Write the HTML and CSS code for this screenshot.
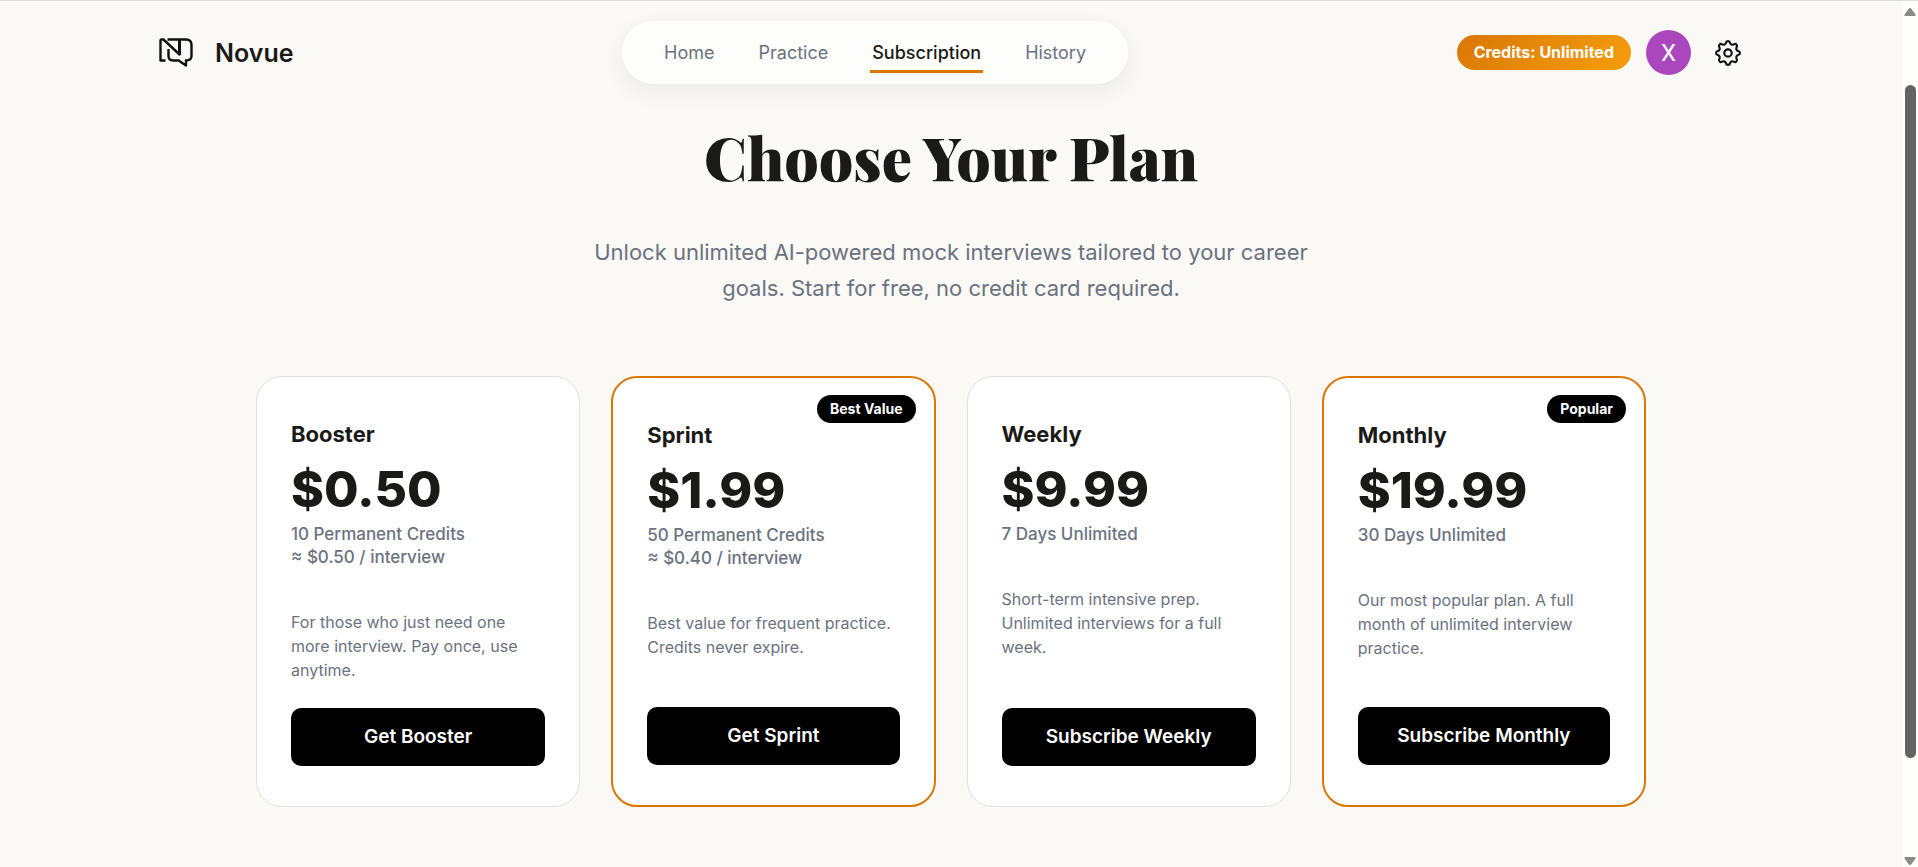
FILE: index.html
```html
<!DOCTYPE html>
<html lang="en">
<head>
<meta charset="utf-8">
<meta name="viewport" content="width=device-width, initial-scale=1">
<title>Novue – Subscription</title>
<link rel="stylesheet" href="styles.css">
</head>
<body>
<div class="page">
  <header class="topbar">
    <a class="brand" href="#">
      <svg class="brand-logo" viewBox="0 0 34 30" fill="none" stroke="#111" stroke-width="2.400" stroke-linejoin="round">
        <path d="M6.500 22.500H1.500V2.500Q1.500 1.500 2.500 1.500H4.500L20.500 16.500V3.500"/>
        <path d="M8.500 1.500H27Q32.500 1.500 32.500 7V18Q32.500 22.500 27 22.500V27.500L21 23.500L20 22.500H14Q9.500 22.500 9.500 18V11"/>
        <path d="M20.500 2V17" stroke-width="3"/>
      </svg>
      <span>Novue</span>
    </a>
    <nav class="nav">
      <a href="#">Home</a>
      <a href="#">Practice</a>
      <a class="active" href="#" aria-current="page">Subscription</a>
      <a href="#">History</a>
    </nav>
    <div class="account">
      <span class="credits">Credits: Unlimited</span>
      <button class="avatar" type="button">X</button>
      <button class="settings" type="button" aria-label="Settings">
        <svg viewBox="-12 -12 24 24" fill="none" stroke="#111" stroke-width="2" stroke-linejoin="round">
          <path d="M9.420-1.870A1.900 1.900 0 0 1 9.420 1.870A2.300 2.300 0 0 0 7.980 5.330A1.900 1.900 0 0 1 5.330 7.980A2.300 2.300 0 0 0 1.870 9.420A1.900 1.900 0 0 1-1.870 9.420A2.300 2.300 0 0 0-5.330 7.980A1.900 1.900 0 0 1-7.980 5.330A2.300 2.300 0 0 0-9.420 1.870A1.900 1.900 0 0 1-9.420-1.870A2.300 2.300 0 0 0-7.980-5.330A1.900 1.900 0 0 1-5.330-7.980A2.300 2.300 0 0 0-1.870-9.420A1.900 1.900 0 0 1 1.870-9.420A2.300 2.300 0 0 0 5.330-7.980A1.900 1.900 0 0 1 7.980-5.330A2.300 2.300 0 0 0 9.420-1.870Z"/>
          <circle r="3.400"/>
        </svg>
      </button>
    </div>
  </header>

  <main class="content">
    <h1>Choose Your Plan</h1>
    <p class="lead">Unlock unlimited AI-powered mock interviews tailored to your career goals. Start for free, no credit card required.</p>

    <section class="plans">
      <article class="card">
        <h2>Booster</h2>
        <p class="price">$0.50</p>
        <p class="terms">10 Permanent Credits<br>≈ $0.50 / interview</p>
        <p class="desc">For those who just need one more interview. Pay once, use anytime.</p>
        <button class="buy" type="button">Get Booster</button>
      </article>
      <article class="card featured">
        <span class="badge">Best Value</span>
        <h2>Sprint</h2>
        <p class="price">$1.99</p>
        <p class="terms">50 Permanent Credits<br>≈ $0.40 / interview</p>
        <p class="desc">Best value for frequent practice. Credits never expire.</p>
        <button class="buy" type="button">Get Sprint</button>
      </article>
      <article class="card">
        <h2>Weekly</h2>
        <p class="price">$9.99</p>
        <p class="terms">7 Days Unlimited</p>
        <p class="desc">Short-term intensive prep. Unlimited interviews for a full week.</p>
        <button class="buy" type="button">Subscribe Weekly</button>
      </article>
      <article class="card featured">
        <span class="badge">Popular</span>
        <h2>Monthly</h2>
        <p class="price">$19.99</p>
        <p class="terms">30 Days Unlimited</p>
        <p class="desc">Our most popular plan. A full month of unlimited interview practice.</p>
        <button class="buy" type="button">Subscribe Monthly</button>
      </article>
    </section>
  </main>
</div>
<div class="scrollbar" aria-hidden="true">
  <svg viewBox="0 0 12 8"><path d="M6 0Q7 0 7.500 1L11.500 6.500Q12 8 10.500 8H1.500Q0 8 .5 6.500L4.500 1Q5 0 6 0Z"/></svg>
  <div class="track"><div class="thumb"></div></div>
  <svg class="down" viewBox="0 0 12 8"><path d="M6 0Q7 0 7.500 1L11.500 6.500Q12 8 10.500 8H1.500Q0 8 .5 6.500L4.500 1Q5 0 6 0Z"/></svg>
</div>
</body>
</html>
```

FILE: styles.css
```css
* { box-sizing: border-box; }

body {
  margin: 0;
  min-height: 100vh;
  display: grid;
  grid-template-columns: 1fr 16px;
  border-top: 1px solid #dededc;
  background: #faf9f5;
  color: #1a1a19;
  font-family: Inter, "Liberation Sans", sans-serif;
}

h1, h2, p { margin: 0; }
a { color: inherit; text-decoration: none; }
button { border: 0; padding: 0; font-family: inherit; cursor: pointer; }

.topbar {
  max-width: 1620px;
  margin: 0 auto;
  padding: 20px 11px 0 18px;
  display: flex;
  align-items: center;
  justify-content: space-between;
}

.brand {
  display: flex;
  align-items: center;
  gap: 22px;
  font-size: 25px;
  font-weight: 600;
}
.brand-logo { width: 34px; height: 30px; }

.nav {
  display: flex;
  align-items: center;
  gap: 40px;
  height: 63px;
  padding: 0 39px;
  border: 1px solid #fff;
  border-radius: 32px;
  background: #fdfdfb;
  box-shadow: 0 8px 24px rgba(0, 0, 0, 0.06);
  color: #6b7280;
  font-size: 18px;
}
.nav a { padding: 4px 2px; line-height: 26px; border-bottom: 3px solid transparent; border-top: 3px solid transparent; }
.nav .active { color: #1a1a19; border-bottom-color: #d97706; font-weight: 500; }

.account { display: flex; align-items: center; gap: 15px; }
.credits {
  padding: 0 17px;
  border-radius: 18px;
  background: linear-gradient(135deg, #d97706, #f59e0b);
  color: #fff;
  font-size: 16px;
  font-weight: 700;
  line-height: 35px;
}
.avatar {
  width: 45px;
  height: 45px;
  border-radius: 50%;
  background: #ab47bc;
  color: #fff;
  font-family: Roboto, sans-serif;
  font-size: 24px;
}
.settings { width: 44px; height: 44px; padding: 9px; background: none; }
.settings svg { display: block; width: 26px; height: 26px; }

.content {
  max-width: 1390px;
  margin: 0 auto;
  padding: 30px 0 60px;
}
h1 {
  font-family: "Playfair Display", "Liberation Serif", serif;
  font-size: 60px;
  font-weight: 900;
  line-height: 84px;
  text-align: center;
}
.lead {
  max-width: 760px;
  margin: 36px auto 0;
  color: #6b7280;
  font-size: 22px;
  line-height: 36px;
  text-align: center;
}

.plans {
  display: grid;
  grid-template-columns: repeat(4, 1fr);
  gap: 31px;
  margin-top: 70px;
}
.card {
  position: relative;
  display: flex;
  flex-direction: column;
  padding: 40px 34px;
  border: 1px solid #e0e0de;
  border-radius: 26px;
  background: #fff;
}
.featured { border: 2px solid #d97706; }
.badge {
  position: absolute;
  top: 17px;
  right: 18px;
  padding: 0 13px;
  border-radius: 14px;
  background: #000;
  color: #fff;
  font-size: 14px;
  font-weight: 700;
  line-height: 28px;
}
h2 { font-size: 22px; font-weight: 700; line-height: 34px; }
.price { padding-top: 4px; font-size: 50px; font-weight: 800; line-height: 68px; }
.terms { color: #6b7280; font-size: 17px; font-weight: 500; line-height: 23px; }
.desc { margin: 41px 0 26px; color: #6b7280; font-size: 16px; line-height: 24px; }
.buy {
  height: 58px;
  margin-top: auto;
  border-radius: 10px;
  background: #000;
  color: #fff;
  font-size: 19px;
  font-weight: 600;
  line-height: 26px;
}

.scrollbar {
  position: sticky;
  top: 0;
  height: calc(100vh - 1px);
  display: flex;
  flex-direction: column;
  align-items: center;
  padding: 7px 0 2px;
  background: #fefefd;
}
.scrollbar svg { width: 12px; height: 8px; fill: #8a8a8a; }
.scrollbar .down { transform: rotate(180deg); }
.track { flex: 1; }
.thumb { width: 11px; height: 80%; margin-top: 69px; border-radius: 6px; background: #636363; }
```
